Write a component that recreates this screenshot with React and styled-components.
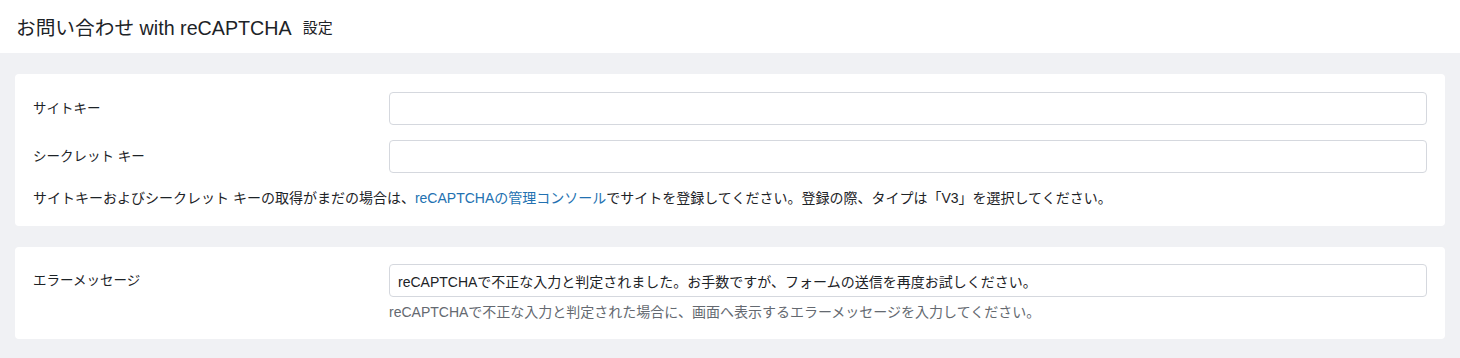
import React from 'react';
import styled, { createGlobalStyle } from 'styled-components';

const GlobalStyle = createGlobalStyle`
  html, body {
    margin: 0;
    padding: 0;
    background: #f0f1f4;
  }
  body {
    font-family: "Liberation Sans", "Noto Sans CJK JP", sans-serif;
    color: #1d2327;
    font-size: 14px;
  }
`;

const Page = styled.div`
  min-height: 358px;
  background: #f0f1f4;
`;

const Header = styled.header`
  height: 53px;
  background: #fff;
  display: flex;
  align-items: center;
  padding: 0 16px;
  gap: 11px;
  box-sizing: border-box;
`;

const Title = styled.h1`
  margin: 0;
  font-size: 19.7px;
  font-weight: 400;
  color: #1d2327;
`;

const Sub = styled.span`
  font-size: 15px;
  color: #1d2327;
`;

const Main = styled.main`
  padding: 21px 15px;
  display: flex;
  flex-direction: column;
  gap: 21px;
`;

const Card = styled.section`
  background: #fff;
  border-radius: 4px;
  padding: ${(p) => p.$pad || '18px'};
  display: flex;
  flex-direction: column;
  gap: 15px;
`;

const Row = styled.div`
  display: grid;
  grid-template-columns: 356px 1fr;
  align-items: ${(p) => (p.$top ? 'start' : 'center')};
`;

const Label = styled.label`
  font-size: 13.5px;
  color: #1d2327;
  line-height: 33px;
`;

const Field = styled.div`
  display: flex;
  flex-direction: column;
  gap: 5px;
`;

const Input = styled.input`
  height: 33px;
  box-sizing: border-box;
  border: 1px solid #d5d8de;
  border-radius: 4px;
  padding: 0 8px;
  font-family: inherit;
  font-size: 14px;
  color: #1d2327;
  outline: none;
  width: 100%;
  margin: 0;
`;

const Note = styled.p`
  margin: 0;
  line-height: 20px;
  font-size: 14px;
  color: ${(p) => (p.$muted ? '#646970' : '#1d2327')};
`;

const Link = styled.a`
  color: #2271b1;
  text-decoration: none;
`;

export default function App() {
  return (
    <Page>
      <GlobalStyle />
      <Header>
        <Title>お問い合わせ with reCAPTCHA</Title>
        <Sub>設定</Sub>
      </Header>
      <Main>
        <Card>
          <Row>
            <Label htmlFor="site-key">サイトキー</Label>
            <Input id="site-key" type="text" />
          </Row>
          <Row>
            <Label htmlFor="secret-key">シークレット キー</Label>
            <Input id="secret-key" type="text" />
          </Row>
          <Note>
            サイトキーおよびシークレット キーの取得がまだの場合は、
            <Link href="#">reCAPTCHAの管理コンソール</Link>
            でサイトを登録してください。登録の際、タイプは「V3」を選択してください。
          </Note>
        </Card>
        <Card $pad="17px 18px">
          <Row $top>
            <Label htmlFor="error-message">エラーメッセージ</Label>
            <Field>
              <Input
                id="error-message"
                type="text"
                defaultValue="reCAPTCHAで不正な入力と判定されました。お手数ですが、フォームの送信を再度お試しください。"
              />
              <Note $muted>
                reCAPTCHAで不正な入力と判定された場合に、画面へ表示するエラーメッセージを入力してください。
              </Note>
            </Field>
          </Row>
        </Card>
      </Main>
    </Page>
  );
}
